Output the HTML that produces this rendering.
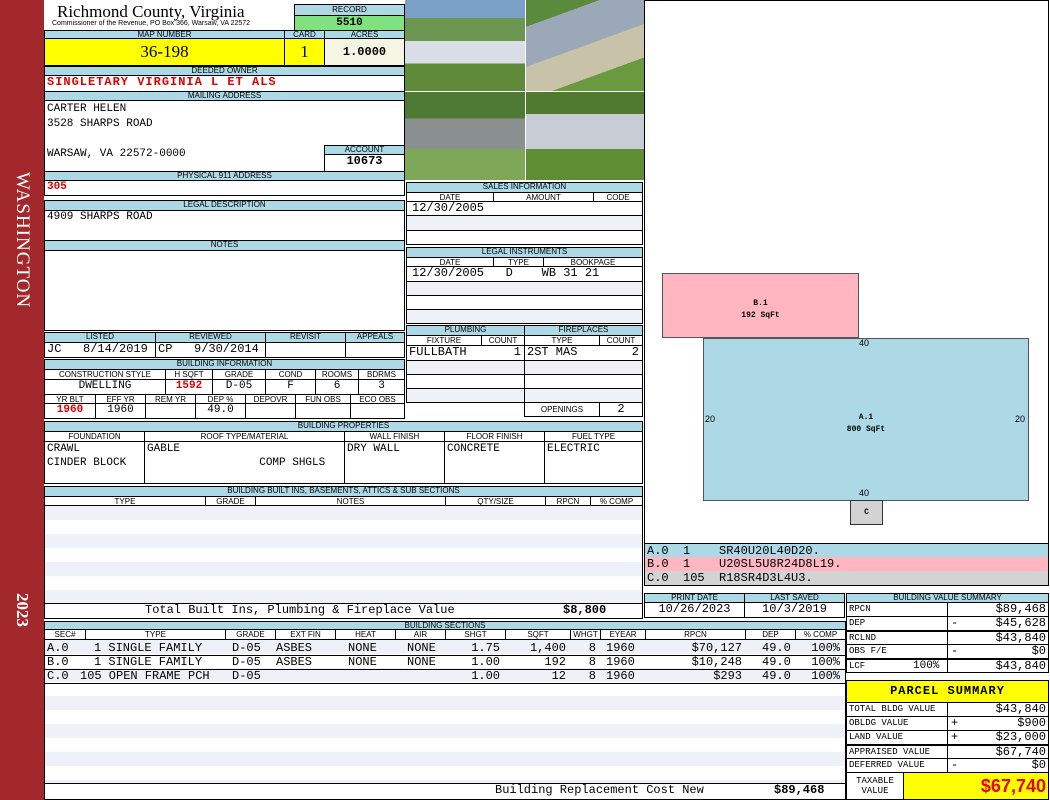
<!DOCTYPE html><html><head><style>
*{margin:0;padding:0;box-sizing:border-box}
body{width:1050px;height:800px;position:relative;background:#fff;overflow:hidden;font-family:"Liberation Mono",monospace;font-size:11px;color:#000}
div{position:absolute}
.h{background:#add8e6;border:1px solid #000;font:8px/8px "Liberation Sans",sans-serif;text-align:center;white-space:nowrap;overflow:hidden}
.s{border:1px solid #000;font:8px/9px "Liberation Sans",sans-serif;text-align:center;background:#fff;white-space:nowrap;overflow:hidden}
.c{border:1px solid #000;background:#fff;white-space:nowrap;overflow:hidden;padding:0 2px;line-height:13px}
.r{color:#d00;font-weight:bold}
.alt{background:#eef2f8}
.ra{text-align:right}.ce{text-align:center}
.sr span{position:absolute;top:0;font-size:12px;line-height:14px;white-space:pre}
</style></head><body>
<div style="left:0;top:0;width:44px;height:800px;background:#a3282b"></div>
<div style="left:22px;top:240px;transform:translate(-50%,-50%) rotate(90deg);color:#fff;font:19px 'Liberation Serif',serif;letter-spacing:1px">WASHINGTON</div>
<div style="left:22px;top:610px;transform:translate(-50%,-50%) rotate(90deg);color:#fff;font:bold 17px 'Liberation Serif',serif">2023</div>

<div style="left:57px;top:2px;font:17px 'Liberation Serif',serif">Richmond County, Virginia</div>
<div style="left:52px;top:20px;font:7px 'Liberation Sans',sans-serif">Commissioner of the Revenue, PO Box 366, Warsaw, VA 22572</div>
<div class="h" style="left:294px;top:4px;width:111px;height:12px;line-height:10px">RECORD</div>
<div class="c ce" style="left:294px;top:15px;width:111px;height:16px;background:#80e27e;font-weight:bold;line-height:14px">5510</div>
<div class="h" style="left:44px;top:30px;width:241px;height:9px">MAP NUMBER</div>
<div class="h" style="left:284px;top:30px;width:41px;height:9px">CARD</div>
<div class="h" style="left:324px;top:30px;width:81px;height:9px">ACRES</div>
<div class="c ce" style="left:44px;top:38px;width:241px;height:28px;background:#ff0;font:17px/26px 'Liberation Serif',serif">36-198</div>
<div class="c ce" style="left:284px;top:38px;width:41px;height:28px;background:#ff0;font:17px/26px 'Liberation Serif',serif">1</div>
<div class="c ce" style="left:324px;top:38px;width:81px;height:28px;background:#f5f5e4;font-weight:bold;line-height:26px;font-size:12px">1.0000</div>
<div class="h" style="left:44px;top:66px;width:361px;height:10px">DEEDED OWNER</div>
<div class="c r" style="left:44px;top:75px;width:361px;height:17px;font-size:12px;letter-spacing:1px">SINGLETARY VIRGINIA L ET ALS</div>
<div class="h" style="left:44px;top:91px;width:361px;height:10px">MAILING ADDRESS</div>
<div class="c" style="left:44px;top:100px;width:361px;height:72px;line-height:15px;padding-top:1px">CARTER HELEN<br>3528 SHARPS ROAD<br><br>WARSAW, VA 22572-0000</div>
<div class="h" style="left:324px;top:145px;width:81px;height:10px">ACCOUNT</div>
<div class="c ce" style="left:324px;top:154px;width:81px;height:18px;font-weight:bold;font-size:12px">10673</div>
<div class="h" style="left:44px;top:171px;width:361px;height:10px">PHYSICAL 911 ADDRESS</div>
<div class="c r" style="left:44px;top:180px;width:361px;height:16px">305</div>
<div class="h" style="left:44px;top:200px;width:361px;height:11px">LEGAL DESCRIPTION</div>
<div class="c" style="left:44px;top:210px;width:361px;height:31px">4909 SHARPS ROAD</div>
<div class="h" style="left:44px;top:240px;width:361px;height:11px">NOTES</div>
<div class="c" style="left:44px;top:250px;width:361px;height:81px"></div>

<div class="h" style="left:44px;top:332px;width:112px;height:11px">LISTED</div>
<div class="h" style="left:155px;top:332px;width:111px;height:11px">REVIEWED</div>
<div class="h" style="left:265px;top:332px;width:81px;height:11px">REVISIT</div>
<div class="h" style="left:345px;top:332px;width:60px;height:11px">APPEALS</div>
<div class="c" style="left:44px;top:342px;width:112px;height:16px;font-size:12px">JC&nbsp;&nbsp;&nbsp;8/14/2019</div>
<div class="c" style="left:155px;top:342px;width:111px;height:16px;font-size:12px">CP&nbsp;&nbsp;&nbsp;9/30/2014</div>
<div class="c" style="left:265px;top:342px;width:81px;height:16px"></div>
<div class="c" style="left:345px;top:342px;width:60px;height:16px"></div>
<div class="h" style="left:44px;top:359px;width:361px;height:11px">BUILDING INFORMATION</div>
<div class="s" style="left:44px;top:369px;width:122px;height:11px">CONSTRUCTION STYLE</div>
<div class="s" style="left:165px;top:369px;width:48px;height:11px">H SQFT</div>
<div class="s" style="left:212px;top:369px;width:54px;height:11px">GRADE</div>
<div class="s" style="left:265px;top:369px;width:51px;height:11px">COND</div>
<div class="s" style="left:315px;top:369px;width:44px;height:11px">ROOMS</div>
<div class="s" style="left:358px;top:369px;width:47px;height:11px">BDRMS</div>
<div class="c ce" style="left:44px;top:379px;width:122px;height:16px">DWELLING</div>
<div class="c ce r" style="left:165px;top:379px;width:48px;height:16px">1592</div>
<div class="c ce" style="left:212px;top:379px;width:54px;height:16px">D-05</div>
<div class="c ce" style="left:265px;top:379px;width:51px;height:16px">F</div>
<div class="c ce" style="left:315px;top:379px;width:44px;height:16px">6</div>
<div class="c ce" style="left:358px;top:379px;width:47px;height:16px">3</div>
<div class="s" style="left:44px;top:394px;width:52px;height:10px">YR BLT</div>
<div class="s" style="left:95px;top:394px;width:51px;height:10px">EFF YR</div>
<div class="s" style="left:145px;top:394px;width:51px;height:10px">REM YR</div>
<div class="s" style="left:195px;top:394px;width:51px;height:10px">DEP %</div>
<div class="s" style="left:245px;top:394px;width:51px;height:10px">DEPOVR</div>
<div class="s" style="left:295px;top:394px;width:56px;height:10px">FUN OBS</div>
<div class="s" style="left:350px;top:394px;width:55px;height:10px">ECO OBS</div>
<div class="c ce r" style="left:44px;top:403px;width:52px;height:16px">1960</div>
<div class="c ce" style="left:95px;top:403px;width:51px;height:16px">1960</div>
<div class="c" style="left:145px;top:403px;width:51px;height:16px"></div>
<div class="c ce" style="left:195px;top:403px;width:51px;height:16px">49.0</div>
<div class="c" style="left:245px;top:403px;width:51px;height:16px"></div>
<div class="c" style="left:295px;top:403px;width:56px;height:16px"></div>
<div class="c" style="left:350px;top:403px;width:55px;height:16px"></div>

<div class="h" style="left:44px;top:421px;width:599px;height:11px">BUILDING PROPERTIES</div>
<div class="s" style="left:44px;top:431px;width:101px;height:11px">FOUNDATION</div>
<div class="s" style="left:144px;top:431px;width:201px;height:11px">ROOF TYPE/MATERIAL</div>
<div class="s" style="left:344px;top:431px;width:101px;height:11px">WALL FINISH</div>
<div class="s" style="left:444px;top:431px;width:101px;height:11px">FLOOR FINISH</div>
<div class="s" style="left:544px;top:431px;width:99px;height:11px">FUEL TYPE</div>
<div class="c" style="left:44px;top:441px;width:101px;height:43px;line-height:14px">CRAWL<br>CINDER BLOCK</div>
<div class="c" style="left:144px;top:441px;width:201px;height:43px;line-height:14px">GABLE<br>&nbsp;&nbsp;&nbsp;&nbsp;&nbsp;&nbsp;&nbsp;&nbsp;&nbsp;&nbsp;&nbsp;&nbsp;&nbsp;&nbsp;&nbsp;&nbsp;&nbsp;COMP SHGLS</div>
<div class="c" style="left:344px;top:441px;width:101px;height:43px;line-height:14px">DRY WALL</div>
<div class="c" style="left:444px;top:441px;width:101px;height:43px;line-height:14px">CONCRETE</div>
<div class="c" style="left:544px;top:441px;width:99px;height:43px;line-height:14px">ELECTRIC</div>

<div class="h" style="left:44px;top:486px;width:599px;height:11px">BUILDING BUILT INS, BASEMENTS, ATTICS &amp; SUB SECTIONS</div>
<div class="s" style="left:44px;top:496px;width:162px;height:10px">TYPE</div>
<div class="s" style="left:205px;top:496px;width:51px;height:10px">GRADE</div>
<div class="s" style="left:255px;top:496px;width:191px;height:10px">NOTES</div>
<div class="s" style="left:445px;top:496px;width:101px;height:10px">QTY/SIZE</div>
<div class="s" style="left:545px;top:496px;width:46px;height:10px">RPCN</div>
<div class="s" style="left:590px;top:496px;width:53px;height:10px">% COMP</div>
<div style="left:44px;top:505px;width:599px;height:99px;border:1px solid #000;background:repeating-linear-gradient(#eef2f8 0 14px,#fff 14px 28px)"></div>
<div class="c" style="left:44px;top:603px;width:599px;height:16px;font-size:12px"><span style="position:absolute;left:100px">Total Built Ins, Plumbing &amp; Fireplace Value</span><span style="position:absolute;left:518px;font-weight:bold">$8,800</span></div>

<div class="h" style="left:44px;top:621px;width:802px;height:9px">BUILDING SECTIONS</div>
<div class="s" style="left:44px;top:629px;width:42px;height:11px">SEC#</div>
<div class="s" style="left:85px;top:629px;width:141px;height:11px">TYPE</div>
<div class="s" style="left:225px;top:629px;width:51px;height:11px">GRADE</div>
<div class="s" style="left:275px;top:629px;width:61px;height:11px">EXT FIN</div>
<div class="s" style="left:335px;top:629px;width:61px;height:11px">HEAT</div>
<div class="s" style="left:395px;top:629px;width:51px;height:11px">AIR</div>
<div class="s" style="left:445px;top:629px;width:61px;height:11px">SHGT</div>
<div class="s" style="left:505px;top:629px;width:66px;height:11px">SQFT</div>
<div class="s" style="left:570px;top:629px;width:31px;height:11px">WHGT</div>
<div class="s" style="left:600px;top:629px;width:46px;height:11px">EYEAR</div>
<div class="s" style="left:645px;top:629px;width:101px;height:11px">RPCN</div>
<div class="s" style="left:745px;top:629px;width:51px;height:11px">DEP</div>
<div class="s" style="left:795px;top:629px;width:51px;height:11px">% COMP</div>
<div style="left:44px;top:639px;width:802px;height:145px;border:1px solid #000;background:repeating-linear-gradient(#eef2f8 0 14px,#fff 14px 28px)"></div>
<div style="left:44px;top:655px;width:802px;border-top:1px solid #000"></div>
<div style="left:44px;top:669px;width:802px;border-top:1px solid #000"></div>
<div style="left:44px;top:683px;width:802px;border-top:1px solid #000"></div>

<div class="sr" style="left:0;top:641px;width:1050px;height:14px">
<span style="left:47px">A.0</span><span style="left:94px">1 SINGLE FAMILY</span><span style="left:232px">D-05</span><span style="left:276px">ASBES</span><span style="left:348px">NONE</span><span style="left:407px">NONE</span><span style="right:550px">1.75</span><span style="right:484px">1,400</span><span style="right:454px">8</span><span style="left:606px">1960</span><span style="right:308px">$70,127</span><span style="left:762px">49.0</span><span style="right:210px">100%</span></div>
<div class="sr" style="left:0;top:655px;width:1050px;height:14px">
<span style="left:47px">B.0</span><span style="left:94px">1 SINGLE FAMILY</span><span style="left:232px">D-05</span><span style="left:276px">ASBES</span><span style="left:348px">NONE</span><span style="left:407px">NONE</span><span style="right:550px">1.00</span><span style="right:484px">192</span><span style="right:454px">8</span><span style="left:606px">1960</span><span style="right:308px">$10,248</span><span style="left:762px">49.0</span><span style="right:210px">100%</span></div>
<div class="sr" style="left:0;top:669px;width:1050px;height:14px">
<span style="left:47px">C.0</span><span style="left:80px">105 OPEN FRAME PCH</span><span style="left:232px">D-05</span><span style="right:550px">1.00</span><span style="right:484px">12</span><span style="right:454px">8</span><span style="left:606px">1960</span><span style="right:308px">$293</span><span style="left:762px">49.0</span><span style="right:210px">100%</span></div>

<div class="c" style="left:44px;top:783px;width:802px;height:17px;font-size:12px"><span style="position:absolute;left:450px">Building Replacement Cost New</span><span style="position:absolute;left:729px;font-weight:bold">$89,468</span></div>

<!-- photos -->
<div style="left:405px;top:0;width:120px;height:91px;background:linear-gradient(#7aa0c8 0 20%,#6d9650 20% 45%,#d8dde6 45% 70%,#5f8a3a 70%)"></div>
<div style="left:526px;top:0;width:118px;height:91px;background:linear-gradient(160deg,#5a8a3c 0 20%,#9aa8b8 20% 50%,#c7c2a8 50% 75%,#6a9a40 75%)"></div>
<div style="left:405px;top:92px;width:120px;height:88px;background:linear-gradient(#4f7a36 0 30%,#8a9090 30% 65%,#7ea858 65%)"></div>
<div style="left:526px;top:92px;width:118px;height:88px;background:linear-gradient(#507a30 0 25%,#c8ccd4 25% 65%,#5e8e34 65%)"></div>

<!-- sales -->
<div class="h" style="left:406px;top:182px;width:237px;height:11px">SALES INFORMATION</div>
<div class="s" style="left:406px;top:192px;width:88px;height:10px">DATE</div>
<div class="s" style="left:493px;top:192px;width:101px;height:10px">AMOUNT</div>
<div class="s" style="left:593px;top:192px;width:50px;height:10px">CODE</div>
<div class="c" style="left:406px;top:201px;width:237px;height:15px;font-size:12px;padding-left:5px">12/30/2005</div>
<div class="c alt" style="left:406px;top:215px;width:237px;height:16px"></div>
<div class="c" style="left:406px;top:230px;width:237px;height:15px"></div>
<div class="h" style="left:406px;top:247px;width:237px;height:11px">LEGAL INSTRUMENTS</div>
<div class="s" style="left:406px;top:257px;width:88px;height:10px">DATE</div>
<div class="s" style="left:493px;top:257px;width:51px;height:10px">TYPE</div>
<div class="s" style="left:543px;top:257px;width:100px;height:10px">BOOKPAGE</div>
<div class="c" style="left:406px;top:266px;width:237px;height:16px;font-size:12px;padding-left:5px">12/30/2005&nbsp;&nbsp;&nbsp;D&nbsp;&nbsp;&nbsp;&nbsp;WB 31 21</div>
<div class="c alt" style="left:406px;top:281px;width:237px;height:15px"></div>
<div class="c" style="left:406px;top:295px;width:237px;height:15px"></div>
<div class="c alt" style="left:406px;top:309px;width:237px;height:15px"></div>
<div class="h" style="left:406px;top:325px;width:119px;height:11px">PLUMBING</div>
<div class="h" style="left:524px;top:325px;width:119px;height:11px">FIREPLACES</div>
<div class="s" style="left:406px;top:335px;width:76px;height:11px">FIXTURE</div>
<div class="s" style="left:481px;top:335px;width:44px;height:11px">COUNT</div>
<div class="s" style="left:524px;top:335px;width:76px;height:11px">TYPE</div>
<div class="s" style="left:599px;top:335px;width:44px;height:11px">COUNT</div>
<div class="c" style="left:406px;top:345px;width:119px;height:16px;font-size:12px">FULLBATH<span style="position:absolute;right:3px">1</span></div>
<div class="c" style="left:524px;top:345px;width:119px;height:16px;font-size:12px">2ST MAS<span style="position:absolute;right:3px">2</span></div>
<div class="c alt" style="left:406px;top:360px;width:119px;height:15px"></div>
<div class="c alt" style="left:524px;top:360px;width:119px;height:15px"></div>
<div class="c" style="left:406px;top:374px;width:119px;height:15px"></div>
<div class="c" style="left:524px;top:374px;width:119px;height:15px"></div>
<div class="c alt" style="left:406px;top:388px;width:119px;height:15px"></div>
<div class="c alt" style="left:524px;top:388px;width:119px;height:15px"></div>
<div class="s" style="left:524px;top:402px;width:76px;height:15px;line-height:13px">OPENINGS</div>
<div class="c ce" style="left:599px;top:402px;width:44px;height:15px;font-size:12px">2</div>

<!-- sketch -->
<div style="left:644px;top:0;width:405px;height:544px;border:1px solid #000"></div>
<div style="left:662px;top:273px;width:197px;height:65px;background:#ffb6c1;border:1px solid #555;font:bold 8px/12px 'Liberation Mono',monospace;text-align:center;padding-top:24px">B.1<br>192 SqFt</div>
<div style="left:703px;top:338px;width:326px;height:163px;background:#add8e6;border:1px solid #555;font:bold 8px/12px 'Liberation Mono',monospace;text-align:center;padding-top:73px">A.1<br>800 SqFt</div>
<div style="left:850px;top:500px;width:33px;height:25px;background:#d3d3d3;border:1px solid #333;font:bold 8px/23px 'Liberation Mono',monospace;text-align:center">C</div>
<div style="left:859px;top:338px;font:9px 'Liberation Sans',sans-serif">40</div>
<div style="left:859px;top:488px;font:9px 'Liberation Sans',sans-serif">40</div>
<div style="left:705px;top:414px;font:9px 'Liberation Sans',sans-serif">20</div>
<div style="left:1015px;top:414px;font:9px 'Liberation Sans',sans-serif">20</div>
<div class="c" style="left:644px;top:543px;width:405px;height:15px;background:#add8e6;border-bottom:0;line-height:14px;font-size:12px">A.0&nbsp;&nbsp;1&nbsp;&nbsp;&nbsp;&nbsp;SR40U20L40D20.</div>
<div class="c" style="left:644px;top:557px;width:405px;height:14px;background:#ffb6c1;border-top:0;border-bottom:0;line-height:14px;font-size:12px">B.0&nbsp;&nbsp;1&nbsp;&nbsp;&nbsp;&nbsp;U20SL5U8R24D8L19.</div>
<div class="c" style="left:644px;top:571px;width:405px;height:15px;background:#d3d3d3;border-top:0;line-height:14px;font-size:12px">C.0&nbsp;&nbsp;105&nbsp;&nbsp;R18SR4D3L4U3.</div>

<div class="h" style="left:644px;top:593px;width:101px;height:10px">PRINT DATE</div>
<div class="h" style="left:744px;top:593px;width:101px;height:10px">LAST SAVED</div>
<div class="c ce" style="left:644px;top:602px;width:101px;height:16px;font-size:12px">10/26/2023</div>
<div class="c ce" style="left:744px;top:602px;width:101px;height:16px;font-size:12px">10/3/2019</div>

<div class="h" style="left:846px;top:593px;width:203px;height:10px">BUILDING VALUE SUMMARY</div>
<div style="left:846px;top:602px;width:203px;font-size:12px">
<div class="c" style="position:relative;width:203px;height:15px;font-size:9px">RPCN<span style="position:absolute;left:100px;top:0;bottom:0;border-left:1px solid #000"></span><span style="position:absolute;right:2px;font-size:12px">$89,468</span></div>
<div class="c" style="position:relative;width:203px;height:15px;margin-top:-1px;font-size:9px">DEP<span style="position:absolute;left:100px;top:0;bottom:0;border-left:1px solid #000"></span><span style="position:absolute;left:104px;font-size:12px">-</span><span style="position:absolute;right:2px;font-size:12px">$45,628</span></div>
<div class="c" style="position:relative;width:203px;height:15px;margin-top:-1px;border-top:2px solid #000;font-size:9px">RCLND<span style="position:absolute;left:100px;top:0;bottom:0;border-left:1px solid #000"></span><span style="position:absolute;right:2px;font-size:12px">$43,840</span></div>
<div class="c" style="position:relative;width:203px;height:15px;margin-top:-1px;font-size:9px">OBS F/E<span style="position:absolute;left:100px;top:0;bottom:0;border-left:1px solid #000"></span><span style="position:absolute;left:104px;font-size:12px">-</span><span style="position:absolute;right:2px;font-size:12px">$0</span></div>
<div class="c" style="position:relative;width:203px;height:15px;margin-top:-1px;border-top:2px solid #000;font-size:9px">LCF<span style="position:absolute;left:66px;font-size:11px">100%</span><span style="position:absolute;left:100px;top:0;bottom:0;border-left:1px solid #000"></span><span style="position:absolute;right:2px;font-size:12px">$43,840</span></div>
</div>

<div class="c ce" style="left:846px;top:680px;width:203px;height:23px;background:#ff0;font:bold 12px/21px 'Liberation Mono',monospace;letter-spacing:1px">PARCEL SUMMARY</div>
<div style="left:846px;top:702px;width:203px;font-size:12px">
<div class="c" style="position:relative;width:203px;height:15px;font-size:9px">TOTAL BLDG VALUE<span style="position:absolute;left:100px;top:0;bottom:0;border-left:1px solid #000"></span><span style="position:absolute;right:2px;font-size:12px">$43,840</span></div>
<div class="c" style="position:relative;width:203px;height:15px;margin-top:-1px;font-size:9px">OBLDG VALUE<span style="position:absolute;left:100px;top:0;bottom:0;border-left:1px solid #000"></span><span style="position:absolute;left:104px;font-size:12px">+</span><span style="position:absolute;right:2px;font-size:12px">$900</span></div>
<div class="c" style="position:relative;width:203px;height:15px;margin-top:-1px;font-size:9px">LAND VALUE<span style="position:absolute;left:100px;top:0;bottom:0;border-left:1px solid #000"></span><span style="position:absolute;left:104px;font-size:12px">+</span><span style="position:absolute;right:2px;font-size:12px">$23,000</span></div>
<div class="c" style="position:relative;width:203px;height:15px;margin-top:-1px;border-top:2px solid #000;font-size:9px">APPRAISED VALUE<span style="position:absolute;left:100px;top:0;bottom:0;border-left:1px solid #000"></span><span style="position:absolute;right:2px;font-size:12px">$67,740</span></div>
<div class="c" style="position:relative;width:203px;height:15px;margin-top:-1px;font-size:9px">DEFERRED VALUE<span style="position:absolute;left:100px;top:0;bottom:0;border-left:1px solid #000"></span><span style="position:absolute;left:104px;font-size:12px">-</span><span style="position:absolute;right:2px;font-size:12px">$0</span></div>
</div>
<div class="c ce" style="left:846px;top:772px;width:58px;height:28px;font-size:9px;line-height:10px;padding-top:3px">TAXABLE<br>VALUE</div>
<div class="c ra" style="left:903px;top:772px;width:146px;height:28px;background:#ff0;color:#e00;font:bold 18px/26px 'Liberation Sans',sans-serif">$67,740</div>
</body></html>
